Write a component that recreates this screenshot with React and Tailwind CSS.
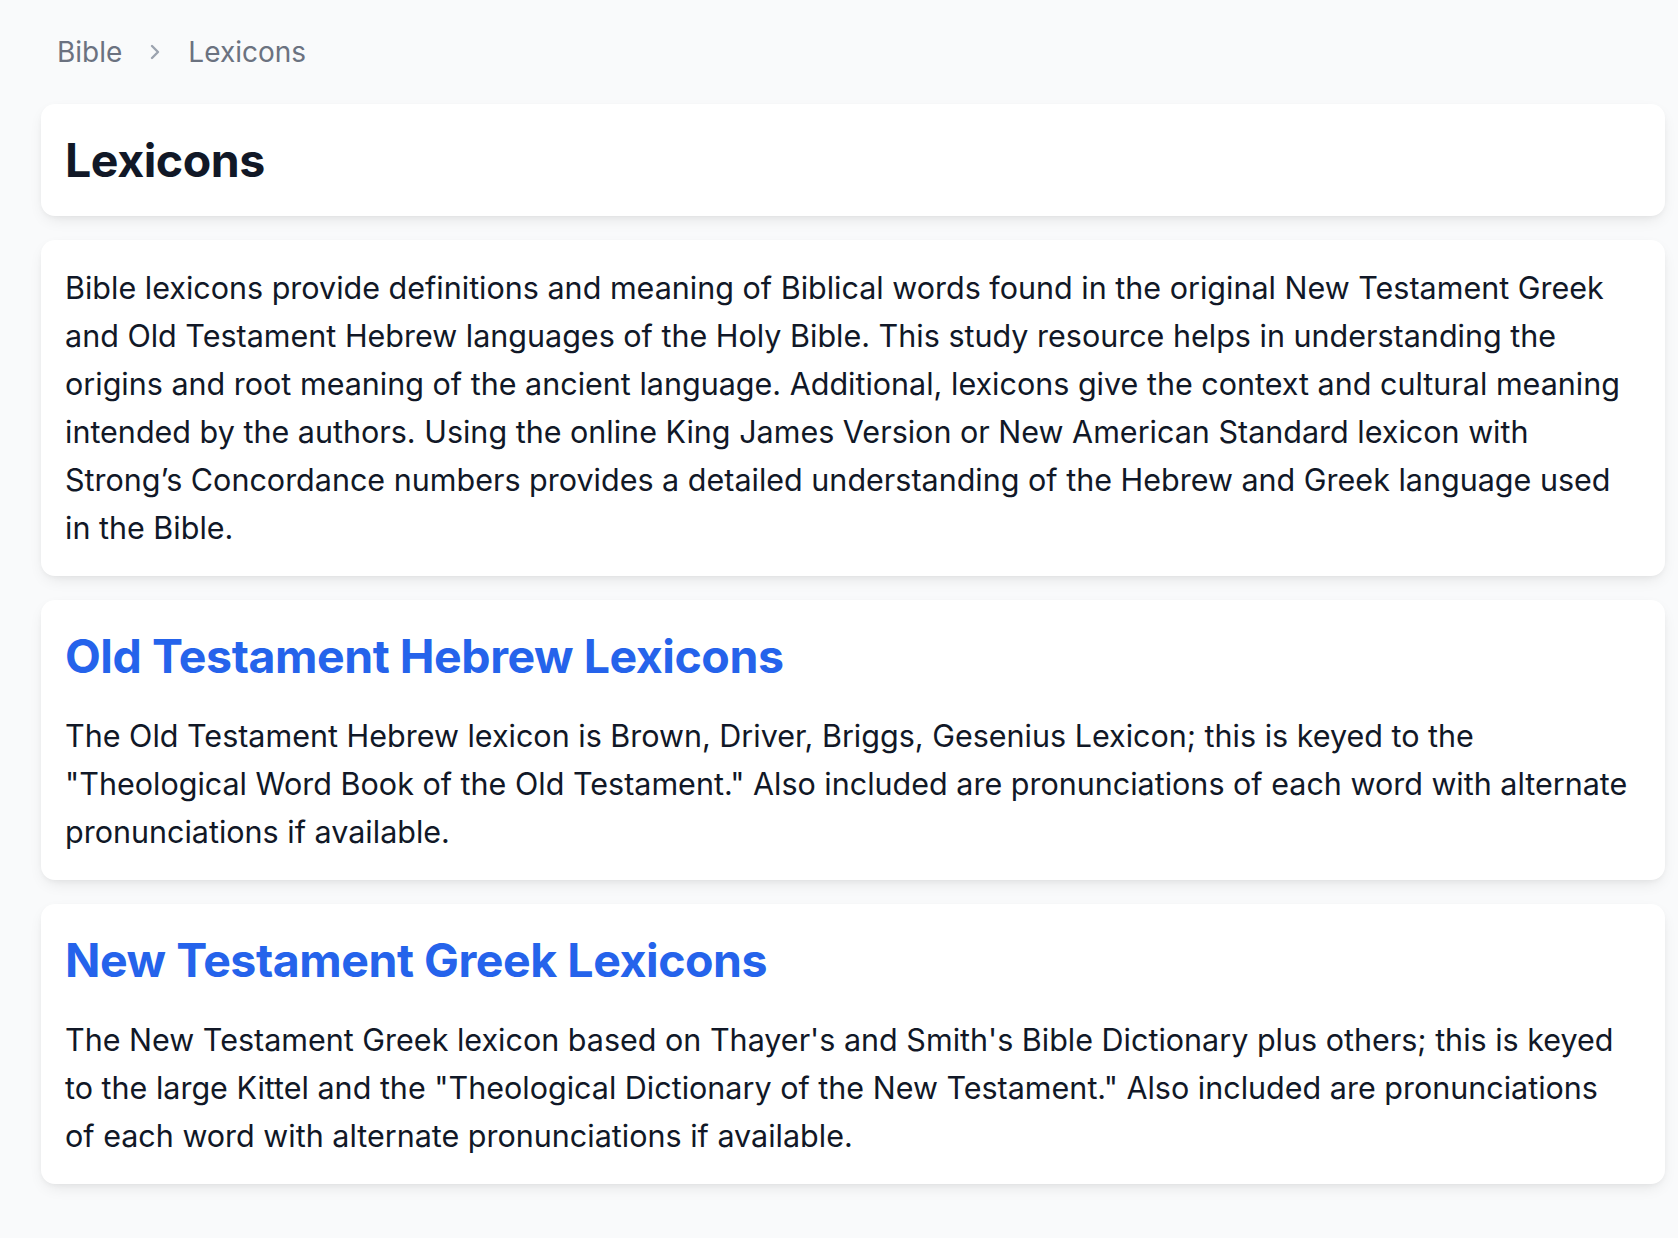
import React from "react";

const font = { fontFamily: "Inter, 'Noto Sans', sans-serif" };

function Card({ children }) {
  return (
    <section className="rounded-[14px] bg-white py-6 pl-6 pr-[32px] shadow-[0_6px_16px_-4px_rgba(0,0,0,0.10),0_2px_6px_-2px_rgba(0,0,0,0.06)]">
      {children}
    </section>
  );
}

export default function App() {
  return (
    <div
      className="min-h-screen bg-[#f9fafb] pl-[41px] pr-[13px] pt-8 pb-14 text-[#111827] antialiased"
      style={font}
    >
      <nav className="flex items-center px-4 text-[28px] leading-[40px] text-[#6b7280]">
        <span>Bible</span>
        <svg
          className="ml-[27px] mr-[27px] h-[16px] w-[12px] text-[#9ca3af]"
          viewBox="0 0 12 16"
          fill="none"
          stroke="currentColor"
          strokeWidth="2.4"
          strokeLinecap="round"
          strokeLinejoin="round"
        >
          <polyline points="3,2 9,8 3,14" />
        </svg>
        <span>Lexicons</span>
      </nav>

      <div className="mt-8 flex flex-col gap-6">
        <Card>
          <h1 className="text-[46.5px] font-bold leading-[64px] tracking-[-0.01em] text-[#111827]">
            Lexicons
          </h1>
        </Card>

        <Card>
          <p className="text-[30.5px] leading-[48px]">
            Bible lexicons provide definitions and meaning of Biblical words found in the original New
            Testament Greek and Old Testament Hebrew languages of the Holy Bible. This study resource
            helps in understanding the origins and root meaning of the ancient language. Additional,
            lexicons give the context and cultural meaning intended by the authors. Using the online King
            James Version or New American Standard lexicon with Strong’s Concordance numbers provides a
            detailed understanding of the Hebrew and Greek language used in the Bible.
          </p>
        </Card>

        <Card>
          <h2 className="text-[46.5px] font-bold leading-[64px] tracking-[-0.01em] text-[#2563eb]">
            Old Testament Hebrew Lexicons
          </h2>
          <p className="mt-6 text-[30.5px] leading-[48px]">
            The Old Testament Hebrew lexicon is Brown, Driver, Briggs, Gesenius Lexicon; this is keyed to
            the "Theological Word Book of the Old Testament." Also included are pronunciations of each
            word with alternate pronunciations if available.
          </p>
        </Card>

        <Card>
          <h2 className="text-[46.5px] font-bold leading-[64px] tracking-[-0.01em] text-[#2563eb]">
            New Testament Greek Lexicons
          </h2>
          <p className="mt-6 text-[30.5px] leading-[48px]">
            The New Testament Greek lexicon based on Thayer's and Smith's Bible Dictionary plus others;
            this is keyed to the large Kittel and the "Theological Dictionary of the New Testament." Also
            included are pronunciations of each word with alternate pronunciations if available.
          </p>
        </Card>
      </div>
    </div>
  );
}
